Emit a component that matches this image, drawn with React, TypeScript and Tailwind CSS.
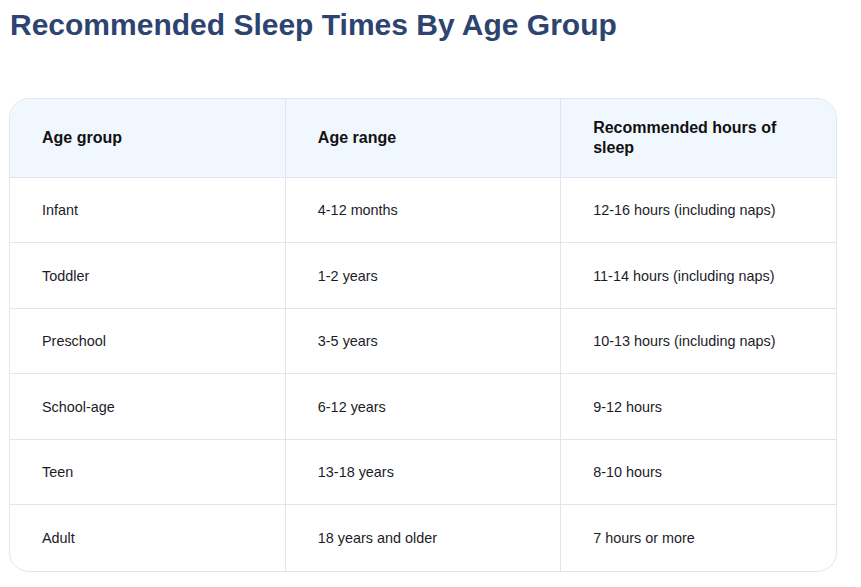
const rows = [
  ["Infant", "4-12 months", "12-16 hours (including naps)"],
  ["Toddler", "1-2 years", "11-14 hours (including naps)"],
  ["Preschool", "3-5 years", "10-13 hours (including naps)"],
  ["School-age", "6-12 years", "9-12 hours"],
  ["Teen", "13-18 years", "8-10 hours"],
  ["Adult", "18 years and older", "7 hours or more"],
];

export default function App() {
  return (
    <div className="min-h-screen bg-white px-[9px] pt-[7px] font-['Liberation_Sans',Arial,sans-serif]">
      <h1 className="pl-px text-[30px] font-bold leading-[36px] text-[#2d4471]">
        Recommended Sleep Times By Age Group
      </h1>

      <div className="mt-[55px] w-[828px] overflow-hidden rounded-[20px] border border-[#dfe5f1]">
        <table className="w-full table-fixed border-collapse">
          <thead>
            <tr className="bg-[#f1f7fe]">
              {["Age group", "Age range", "Recommended hours of sleep"].map((h, i) => (
                <th
                  key={h}
                  className={`h-[78px] px-8 text-left align-middle text-base font-bold leading-5 text-[#111] ${
                    i < 2 ? "border-r border-[#dfe5f1]" : ""
                  }`}
                >
                  {h}
                </th>
              ))}
            </tr>
          </thead>
          <tbody>
            {rows.map((r) => (
              <tr key={r[0]} className="border-t border-[#dfe5f1]">
                {r.map((c, i) => (
                  <td
                    key={i}
                    className={`h-[65.6px] px-8 pt-[2px] align-middle text-[14.4px] text-[#1c1c28] ${
                      i < 2 ? "border-r border-[#dfe5f1]" : ""
                    }`}
                  >
                    {c}
                  </td>
                ))}
              </tr>
            ))}
          </tbody>
        </table>
      </div>
    </div>
  );
}
